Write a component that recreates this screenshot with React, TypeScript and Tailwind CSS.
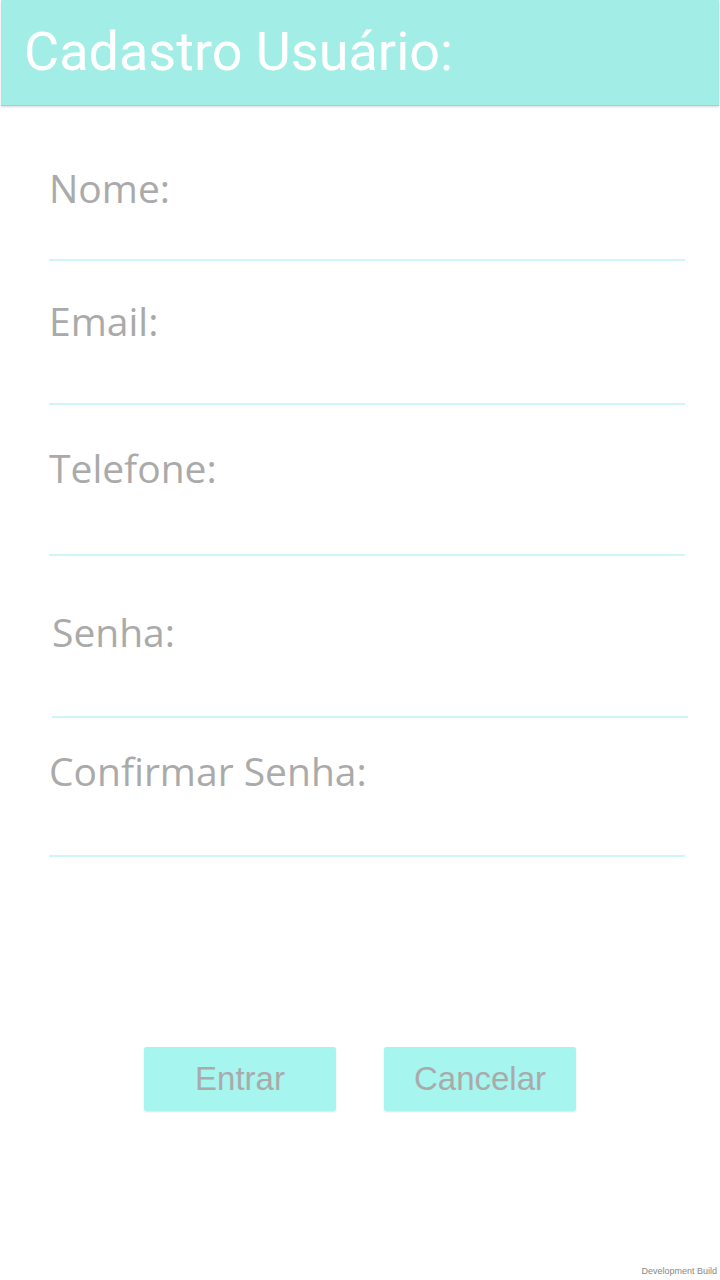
const fields = [
  { label: "Nome:", box: "h-[155px] pt-[62px] ml-[49px] mr-[35px]" },
  { label: "Email:", box: "h-[144px] pt-[40px] ml-[49px] mr-[35px]" },
  { label: "Telefone:", box: "h-[151px] pt-[43px] ml-[49px] mr-[35px]" },
  { label: "Senha:", box: "h-[162px] pt-[56px] ml-[52px] mr-[32px]" },
  { label: "Confirmar Senha:", box: "h-[139px] pt-[33px] ml-[49px] mr-[35px]" },
];

export default function App() {
  return (
    <div className="relative min-h-[1280px] w-[720px] bg-white font-['Roboto',sans-serif]">
      {/* header */}
      <div className="mx-px h-[106px] border-b border-[#8fd8d0] bg-[#a2eee6] pl-[23px] pt-[25px] shadow-[0_1px_2px_rgba(0,0,0,0.15)]">
        <h1 className="text-[54px] leading-none text-white">Cadastro Usuário:</h1>
      </div>

      {/* form fields */}
      {fields.map((f) => (
        <div key={f.label} className={`${f.box} border-b-2 border-[#cff6f4]`}>
          <div className="font-['Open_Sans',sans-serif] text-[39px] leading-none text-[#aaaaaa]">{f.label}</div>
        </div>
      ))}

      {/* buttons */}
      <div className="mt-[190px] flex justify-center gap-[48px]">
        <button className="h-[64px] w-[192px] rounded-[3px] bg-[#a7f5ef] font-['Liberation_Sans',sans-serif] text-[33px] text-[#aaaaaa] shadow-[0_1px_2px_rgba(0,0,0,0.12)]">
          Entrar
        </button>
        <button className="h-[64px] w-[192px] rounded-[3px] bg-[#a7f5ef] font-['Liberation_Sans',sans-serif] text-[33px] text-[#aaaaaa] shadow-[0_1px_2px_rgba(0,0,0,0.12)]">
          Cancelar
        </button>
      </div>

      <div className="absolute bottom-[4px] right-[3px] font-['Liberation_Sans',sans-serif] text-[9px] leading-none text-[#888] [text-shadow:0_0_1px_#fff]">
        Development Build
      </div>
    </div>
  );
}
